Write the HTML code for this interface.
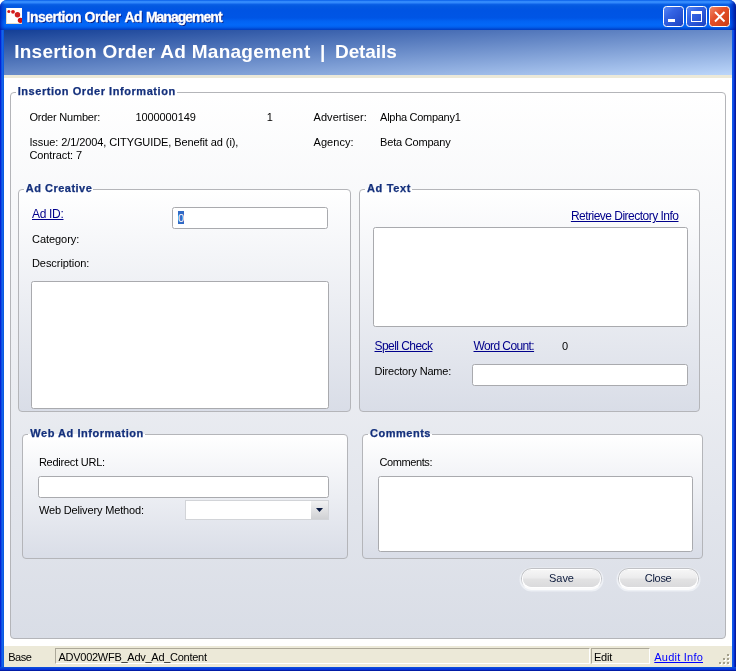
<!DOCTYPE html>
<html><head><meta charset="utf-8">
<style>
*{box-sizing:border-box;margin:0;padding:0}
html,body{width:736px;height:671px;overflow:hidden;background:#fff}
body{position:relative;font-family:"Liberation Sans",sans-serif;font-size:11px;color:#000}
.abs{position:absolute}
#frame{left:0;top:0;width:736px;height:671px;border-radius:7px 7px 0 0;background:linear-gradient(to right,#0019cf 0,#0831d9 1px,#166aee 2px,#0855dd 4px,#0855dd 732px,#1660f0 733px,#0831d9 734px,#00138c 736px)}
#frameb{left:0;top:667px;width:736px;height:4px;background:linear-gradient(to bottom,#0a50e0 0,#0a46d8 1px,#0831d9 2.5px,#00138c 4px)}
#titlebar{left:0;top:0;width:736px;height:30px;border-radius:7px 7px 0 0;background:linear-gradient(to bottom,#0058e6 0,#2a80f8 1px,#3a93ff 2px,#2a80f8 3px,#0a60e6 4.5px,#0359e0 6px,#0054e3 10px,#0055e5 18px,#0262f2 21px,#0368f8 25px,#0260ee 27px,#0047d0 29px,#003cc0 30px)}
.ti{will-change:opacity;-webkit-text-stroke:0.3px #fff;position:absolute;top:9px;color:#fff;font-weight:bold;font-size:14px;line-height:16px;white-space:nowrap;text-shadow:1px 1px 0 #0a1e82}
#header{left:4px;top:30px;width:728px;height:45px;background:linear-gradient(to bottom right,#143f96,#bcd6fa)}
.ht{will-change:opacity;position:absolute;top:41px;color:#fff;font-weight:bold;font-size:19px;line-height:22px;white-space:nowrap}
#strip{left:4px;top:75px;width:728px;height:3px;background:#ece9d8}
#content{left:4px;top:78px;width:728px;height:568px;background:#fff}
#status{left:4px;top:646px;width:728px;height:21px;background:#ece9d8}
.gb{position:absolute;border:1px solid #b4b5b9;border-radius:4px}
.in{background:linear-gradient(#fff 0%,#d9dde7 100%)}
.lg{will-change:opacity;position:absolute;font-weight:bold;color:#14307c;-webkit-text-stroke:0.25px #14307c;font-size:11px;line-height:13px;white-space:nowrap;padding:0 0 0 2px;overflow:hidden}
.t{position:absolute;white-space:nowrap;line-height:13px;will-change:opacity}
.lk{color:#00008b;text-decoration:underline}
.al{color:#00f;text-decoration:underline}
.nv{color:#0c1a3c}
.inp{position:absolute;background:#fff;border:1px solid #a9aaae;border-radius:2.5px}
.btn{position:absolute;border-radius:9px;background:linear-gradient(#f6f6f6 0%,#ececed 45%,#e2e2e3 55%,#dadadc 100%);box-shadow:0 0 0 1px #fff,0 2px 0 1px #fbfbfc,0 0 0 2px #c1c2c6,0 1px 0 3.500px rgba(240,242,247,0.85)}
.sp{position:absolute;border:1px solid;border-color:#aca899 #fff #fff #aca899;height:16px;top:648px}
</style></head><body>
<div class="abs" id="frame"></div>
<div class="abs" id="frameb"></div>
<div class="abs" id="titlebar"></div>
<div class="abs" style="left:0;top:0;width:736px;height:30px;border-radius:7px 7px 0 0;background:linear-gradient(to right,rgba(0,20,170,.75) 0,rgba(0,30,190,.35) 2px,rgba(0,40,200,0) 5px,rgba(0,40,200,0) 729px,rgba(0,30,190,.45) 732px,rgba(0,15,140,.9) 736px)"></div>
<div class="abs" style="left:6px;top:8px;width:16px;height:16px;background:#fff;overflow:hidden;border-left:1px solid #e8dcc8;border-bottom:1px solid #e8dcc8">
<svg width="16" height="16" style="position:absolute;left:-1px;top:0"><circle cx="2.8" cy="3.5" r="1.5" fill="#d41a1a"/><circle cx="7" cy="3.8" r="1.9" fill="#d41a1a"/><circle cx="11.5" cy="6.8" r="2.7" fill="#d02020"/><circle cx="14.4" cy="12.3" r="2.6" fill="#cc1010"/></svg></div>
<div class="ti" style="left:26.6px;letter-spacing:-0.525px">Insertion</div>
<div class="ti" style="left:84.5px;letter-spacing:-0.445px">Order</div>
<div class="ti" style="left:124.5px;letter-spacing:-0.686px">Ad</div>
<div class="ti" style="left:145.9px;letter-spacing:-0.988px">Management</div>
<div class="abs" id="header"></div>
<div class="ht" style="left:14.2px;letter-spacing:0.269px">Insertion Order Ad Management</div>
<div class="ht" style="left:320.0px;letter-spacing:-0.928px">|</div>
<div class="ht" style="left:335.0px;letter-spacing:-0.088px">Details</div>
<div class="abs" id="strip"></div>
<div class="abs" id="content"></div>
<div class="abs" id="status"></div>

<!-- outer group -->
<div class="gb" style="left:10px;top:92px;width:716px;height:547px;background:linear-gradient(#fff 0%,#d9dde6 100%)"></div>

<!-- Ad Creative -->
<div class="gb in" style="left:18px;top:189px;width:333px;height:223px"></div>
<div class="inp" style="left:172px;top:207px;width:156px;height:22px"></div>
<div class="abs" style="left:178px;top:211px;width:6px;height:13px;background:#316ac5;color:#fff;line-height:15px;overflow:hidden;font-size:11px;will-change:opacity">0</div>
<div class="inp" style="left:31px;top:281px;width:298px;height:128px"></div>

<!-- Ad Text -->
<div class="gb in" style="left:359px;top:189px;width:341px;height:223px"></div>
<div class="inp" style="left:373px;top:227px;width:315px;height:100px"></div>
<div class="inp" style="left:472px;top:364px;width:216px;height:22px"></div>

<!-- Web Ad Information -->
<div class="gb in" style="left:22px;top:434px;width:326px;height:125px"></div>
<div class="inp" style="left:38px;top:476px;width:291px;height:22px"></div>
<div class="inp" style="left:185px;top:500px;width:144px;height:20px;border-radius:0;border-color:#d2d4d8"></div>
<div class="abs" style="left:311px;top:501px;width:17px;height:18px;background:linear-gradient(#f2f2f3,#d0d1d4)"></div>
<svg class="abs" style="left:316px;top:508px" width="7" height="4"><path d="M0 0h7L3.5 4z" fill="#0a1a40"/></svg>

<!-- Comments -->
<div class="gb in" style="left:362px;top:434px;width:341px;height:125px"></div>
<div class="inp" style="left:378px;top:476px;width:315px;height:76px"></div>

<div class="btn" style="left:523px;top:570px;width:77px;height:17px"></div>
<div class="btn" style="left:620px;top:570px;width:77px;height:17px"></div>

<div class="sp" style="left:55px;width:535px"></div>
<div class="sp" style="left:591px;width:59px"></div>

<svg class="abs" style="left:719px;top:654px" width="12" height="12"><rect x="9" y="1" width="2" height="2" fill="#fff"/><rect x="8" y="0" width="2" height="2" fill="#a39f8b"/><rect x="5" y="5" width="2" height="2" fill="#fff"/><rect x="4" y="4" width="2" height="2" fill="#a39f8b"/><rect x="9" y="5" width="2" height="2" fill="#fff"/><rect x="8" y="4" width="2" height="2" fill="#a39f8b"/><rect x="1" y="9" width="2" height="2" fill="#fff"/><rect x="0" y="8" width="2" height="2" fill="#a39f8b"/><rect x="5" y="9" width="2" height="2" fill="#fff"/><rect x="4" y="8" width="2" height="2" fill="#a39f8b"/><rect x="9" y="9" width="2" height="2" fill="#fff"/><rect x="8" y="8" width="2" height="2" fill="#a39f8b"/></svg>
<div class="abs" style="left:15.7px;top:85px;width:161.0px;height:13px;background:linear-gradient(#fff 7px,#fff 7px)"></div><div class="lg" style="left:15.7px;top:85px;letter-spacing:0.555px">Insertion Order Information</div>
<div class="abs" style="left:23.8px;top:182px;width:69.5px;height:13px;background:linear-gradient(#f8f9fb 7px,#fff 7px)"></div><div class="lg" style="left:23.8px;top:182px;letter-spacing:0.487px">Ad Creative</div>
<div class="abs" style="left:365.0px;top:182px;width:47.0px;height:13px;background:linear-gradient(#f8f9fb 7px,#fff 7px)"></div><div class="lg" style="left:365.0px;top:182px;letter-spacing:0.638px">Ad Text</div>
<div class="abs" style="left:28.3px;top:427px;width:116.5px;height:13px;background:linear-gradient(#e7eaef 7px,#fff 7px)"></div><div class="lg" style="left:28.3px;top:427px;letter-spacing:0.534px">Web Ad Information</div>
<div class="abs" style="left:368.0px;top:427px;width:64.0px;height:13px;background:linear-gradient(#e7eaef 7px,#fff 7px)"></div><div class="lg" style="left:368.0px;top:427px;letter-spacing:0.520px">Comments</div>
<div class="t " style="left:29.4px;top:111px;font-size:11px;letter-spacing:-0.212px">Order Number:</div>
<div class="t " style="left:135.4px;top:111px;font-size:11px;letter-spacing:-0.079px">1000000149</div>
<div class="t " style="left:266.7px;top:111px;font-size:11px;letter-spacing:-1.725px">1</div>
<div class="t " style="left:313.5px;top:111px;font-size:11px;letter-spacing:0.061px">Advertiser:</div>
<div class="t " style="left:380.1px;top:111px;font-size:11px;letter-spacing:-0.285px">Alpha Company1</div>
<div class="t " style="left:29.4px;top:136px;font-size:11px;letter-spacing:-0.090px">Issue: 2/1/2004, CITYGUIDE, Benefit ad (i),</div>
<div class="t " style="left:29.4px;top:149px;font-size:11px;letter-spacing:-0.110px">Contract: 7</div>
<div class="t " style="left:313.5px;top:136px;font-size:11px;letter-spacing:0.050px">Agency:</div>
<div class="t " style="left:380.1px;top:136px;font-size:11px;letter-spacing:-0.197px">Beta Company</div>
<div class="t lk" style="left:32.0px;top:208px;font-size:12px;letter-spacing:-0.310px">Ad ID:</div>
<div class="t " style="left:32.0px;top:233px;font-size:11px;letter-spacing:-0.050px">Category:</div>
<div class="t " style="left:32.0px;top:257px;font-size:11px;letter-spacing:-0.069px">Description:</div>
<div class="t lk" style="left:570.9px;top:210px;font-size:12px;letter-spacing:-0.512px">Retrieve Directory Info</div>
<div class="t lk" style="left:374.5px;top:340px;font-size:12px;letter-spacing:-0.557px">Spell Check</div>
<div class="t lk" style="left:473.5px;top:340px;font-size:12px;letter-spacing:-0.596px">Word Count:</div>
<div class="t " style="left:562.0px;top:340px;font-size:11px;letter-spacing:0.375px">0</div>
<div class="t " style="left:374.5px;top:365px;font-size:11px;letter-spacing:-0.191px">Directory Name:</div>
<div class="t " style="left:38.9px;top:456px;font-size:11px;letter-spacing:-0.237px">Redirect URL:</div>
<div class="t " style="left:38.9px;top:504px;font-size:11px;letter-spacing:-0.151px">Web Delivery Method:</div>
<div class="t " style="left:379.5px;top:456px;font-size:11px;letter-spacing:-0.406px">Comments:</div>
<div class="t nv" style="left:549.1px;top:572px;font-size:11px;letter-spacing:-0.070px">Save</div>
<div class="t nv" style="left:644.8px;top:572px;font-size:11px;letter-spacing:-0.305px">Close</div>
<div class="t " style="left:8.2px;top:651px;font-size:11px;letter-spacing:-0.432px">Base</div>
<div class="t " style="left:58.5px;top:651px;font-size:11px;letter-spacing:-0.269px">ADV002WFB_Adv_Ad_Content</div>
<div class="t " style="left:593.9px;top:651px;font-size:11px;letter-spacing:-0.142px">Edit</div>
<div class="t al" style="left:654.3px;top:651px;font-size:11px;letter-spacing:0.222px">Audit Info</div>

<!-- title buttons -->
<svg class="abs" style="left:663px;top:6px" width="67" height="21" viewBox="0 0 67 21">
<defs>
<linearGradient id="gb" x1="0" y1="0" x2="1" y2="1"><stop offset="0" stop-color="#5a8af6"/><stop offset="0.35" stop-color="#3464e4"/><stop offset="1" stop-color="#1a40c0"/></linearGradient>
<linearGradient id="gr" x1="0" y1="0" x2="1" y2="1"><stop offset="0" stop-color="#f08a6a"/><stop offset="0.4" stop-color="#e4502a"/><stop offset="1" stop-color="#cc3c12"/></linearGradient>
</defs>
<rect x="0.5" y="0.5" width="20" height="20" rx="3" fill="url(#gb)" stroke="#fff"/>
<rect x="5" y="13" width="7" height="3" fill="#fff"/>
<rect x="23.5" y="0.5" width="20" height="20" rx="3" fill="url(#gb)" stroke="#fff"/>
<path d="M28 5h11v11h-11zM29 8v7h9v-7z" fill="#fff" fill-rule="evenodd"/>
<rect x="46.5" y="0.5" width="20" height="20" rx="3" fill="url(#gr)" stroke="#fff"/>
<path d="M52 6l9.5 9.5M61.500 6l-9.500 9.500" stroke="#fff" stroke-width="1.900" fill="none"/>
</svg>
</body></html>
